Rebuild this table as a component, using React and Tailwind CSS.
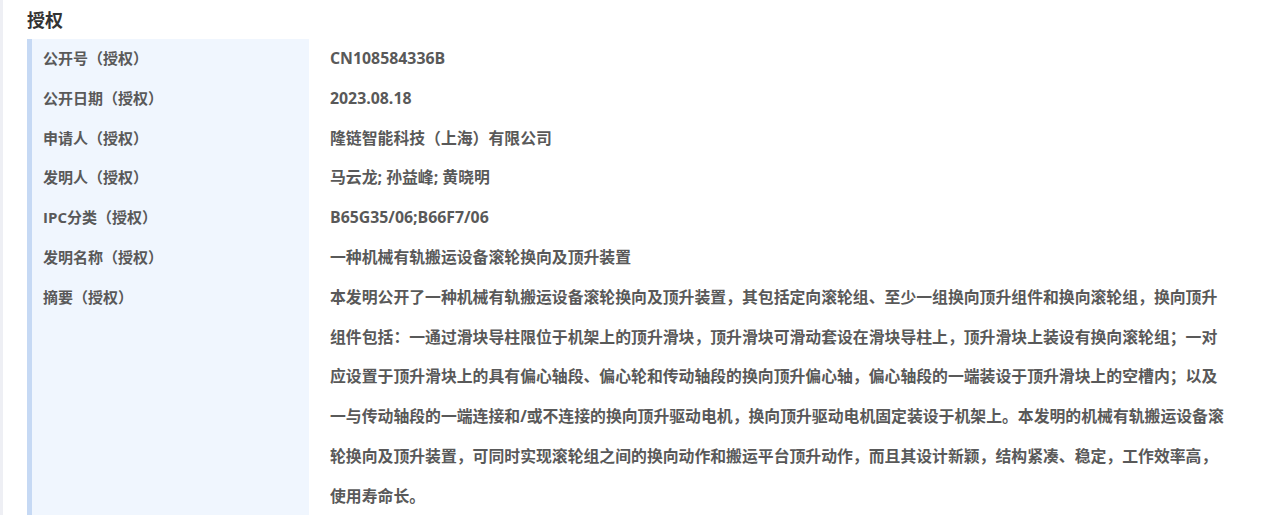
const rows = [
  { label: '公开号（授权）', value: 'CN108584336B' },
  { label: '公开日期（授权）', value: '2023.08.18' },
  { label: '申请人（授权）', value: '隆链智能科技（上海）有限公司' },
  { label: '发明人（授权）', value: '马云龙; 孙益峰; 黄晓明' },
  { label: 'IPC分类（授权）', value: 'B65G35/06;B66F7/06' },
  { label: '发明名称（授权）', value: '一种机械有轨搬运设备滚轮换向及顶升装置' },
  {
    label: '摘要（授权）',
    value:
      '本发明公开了一种机械有轨搬运设备滚轮换向及顶升装置，其包括定向滚轮组、至少一组换向顶升组件和换向滚轮组，换向顶升组件包括：一通过滑块导柱限位于机架上的顶升滑块，顶升滑块可滑动套设在滑块导柱上，顶升滑块上装设有换向滚轮组；一对应设置于顶升滑块上的具有偏心轴段、偏心轮和传动轴段的换向顶升偏心轴，偏心轴段的一端装设于顶升滑块上的空槽内；以及一与传动轴段的一端连接和/或不连接的换向顶升驱动电机，换向顶升驱动电机固定装设于机架上。本发明的机械有轨搬运设备滚轮换向及顶升装置，可同时实现滚轮组之间的换向动作和搬运平台顶升动作，而且其设计新颖，结构紧凑、稳定，工作效率高，使用寿命长。',
  },
]

export default function App() {
  return (
    <div className="flex h-[515px] overflow-hidden bg-white font-['Open_Sans','Noto_Sans_CJK_SC',sans-serif]">
      <div className="w-[3px] flex-none bg-[#eeeff4]" />
      <div className="flex-1 min-w-0 pl-[24px] pr-[37px]">
        <h2 className="h-[39px] leading-[40px] text-[18px] font-bold text-[#333]">授权</h2>
        <div className="flex flex-col">
          {rows.map((r) => (
            <div key={r.label} className="flex">
              <div className="w-[282px] flex-none border-l-[5px] border-[#c6d9f4] bg-[#f0f6fe] pl-[11px] text-[15px] leading-[39.7px] font-bold text-[#595959]">
                {r.label}
              </div>
              <div className="flex-1 min-w-0 pl-[21px] text-[15.85px] leading-[39.8px] font-bold text-[#595959]">
                {r.value}
              </div>
            </div>
          ))}
        </div>
      </div>
    </div>
  )
}
